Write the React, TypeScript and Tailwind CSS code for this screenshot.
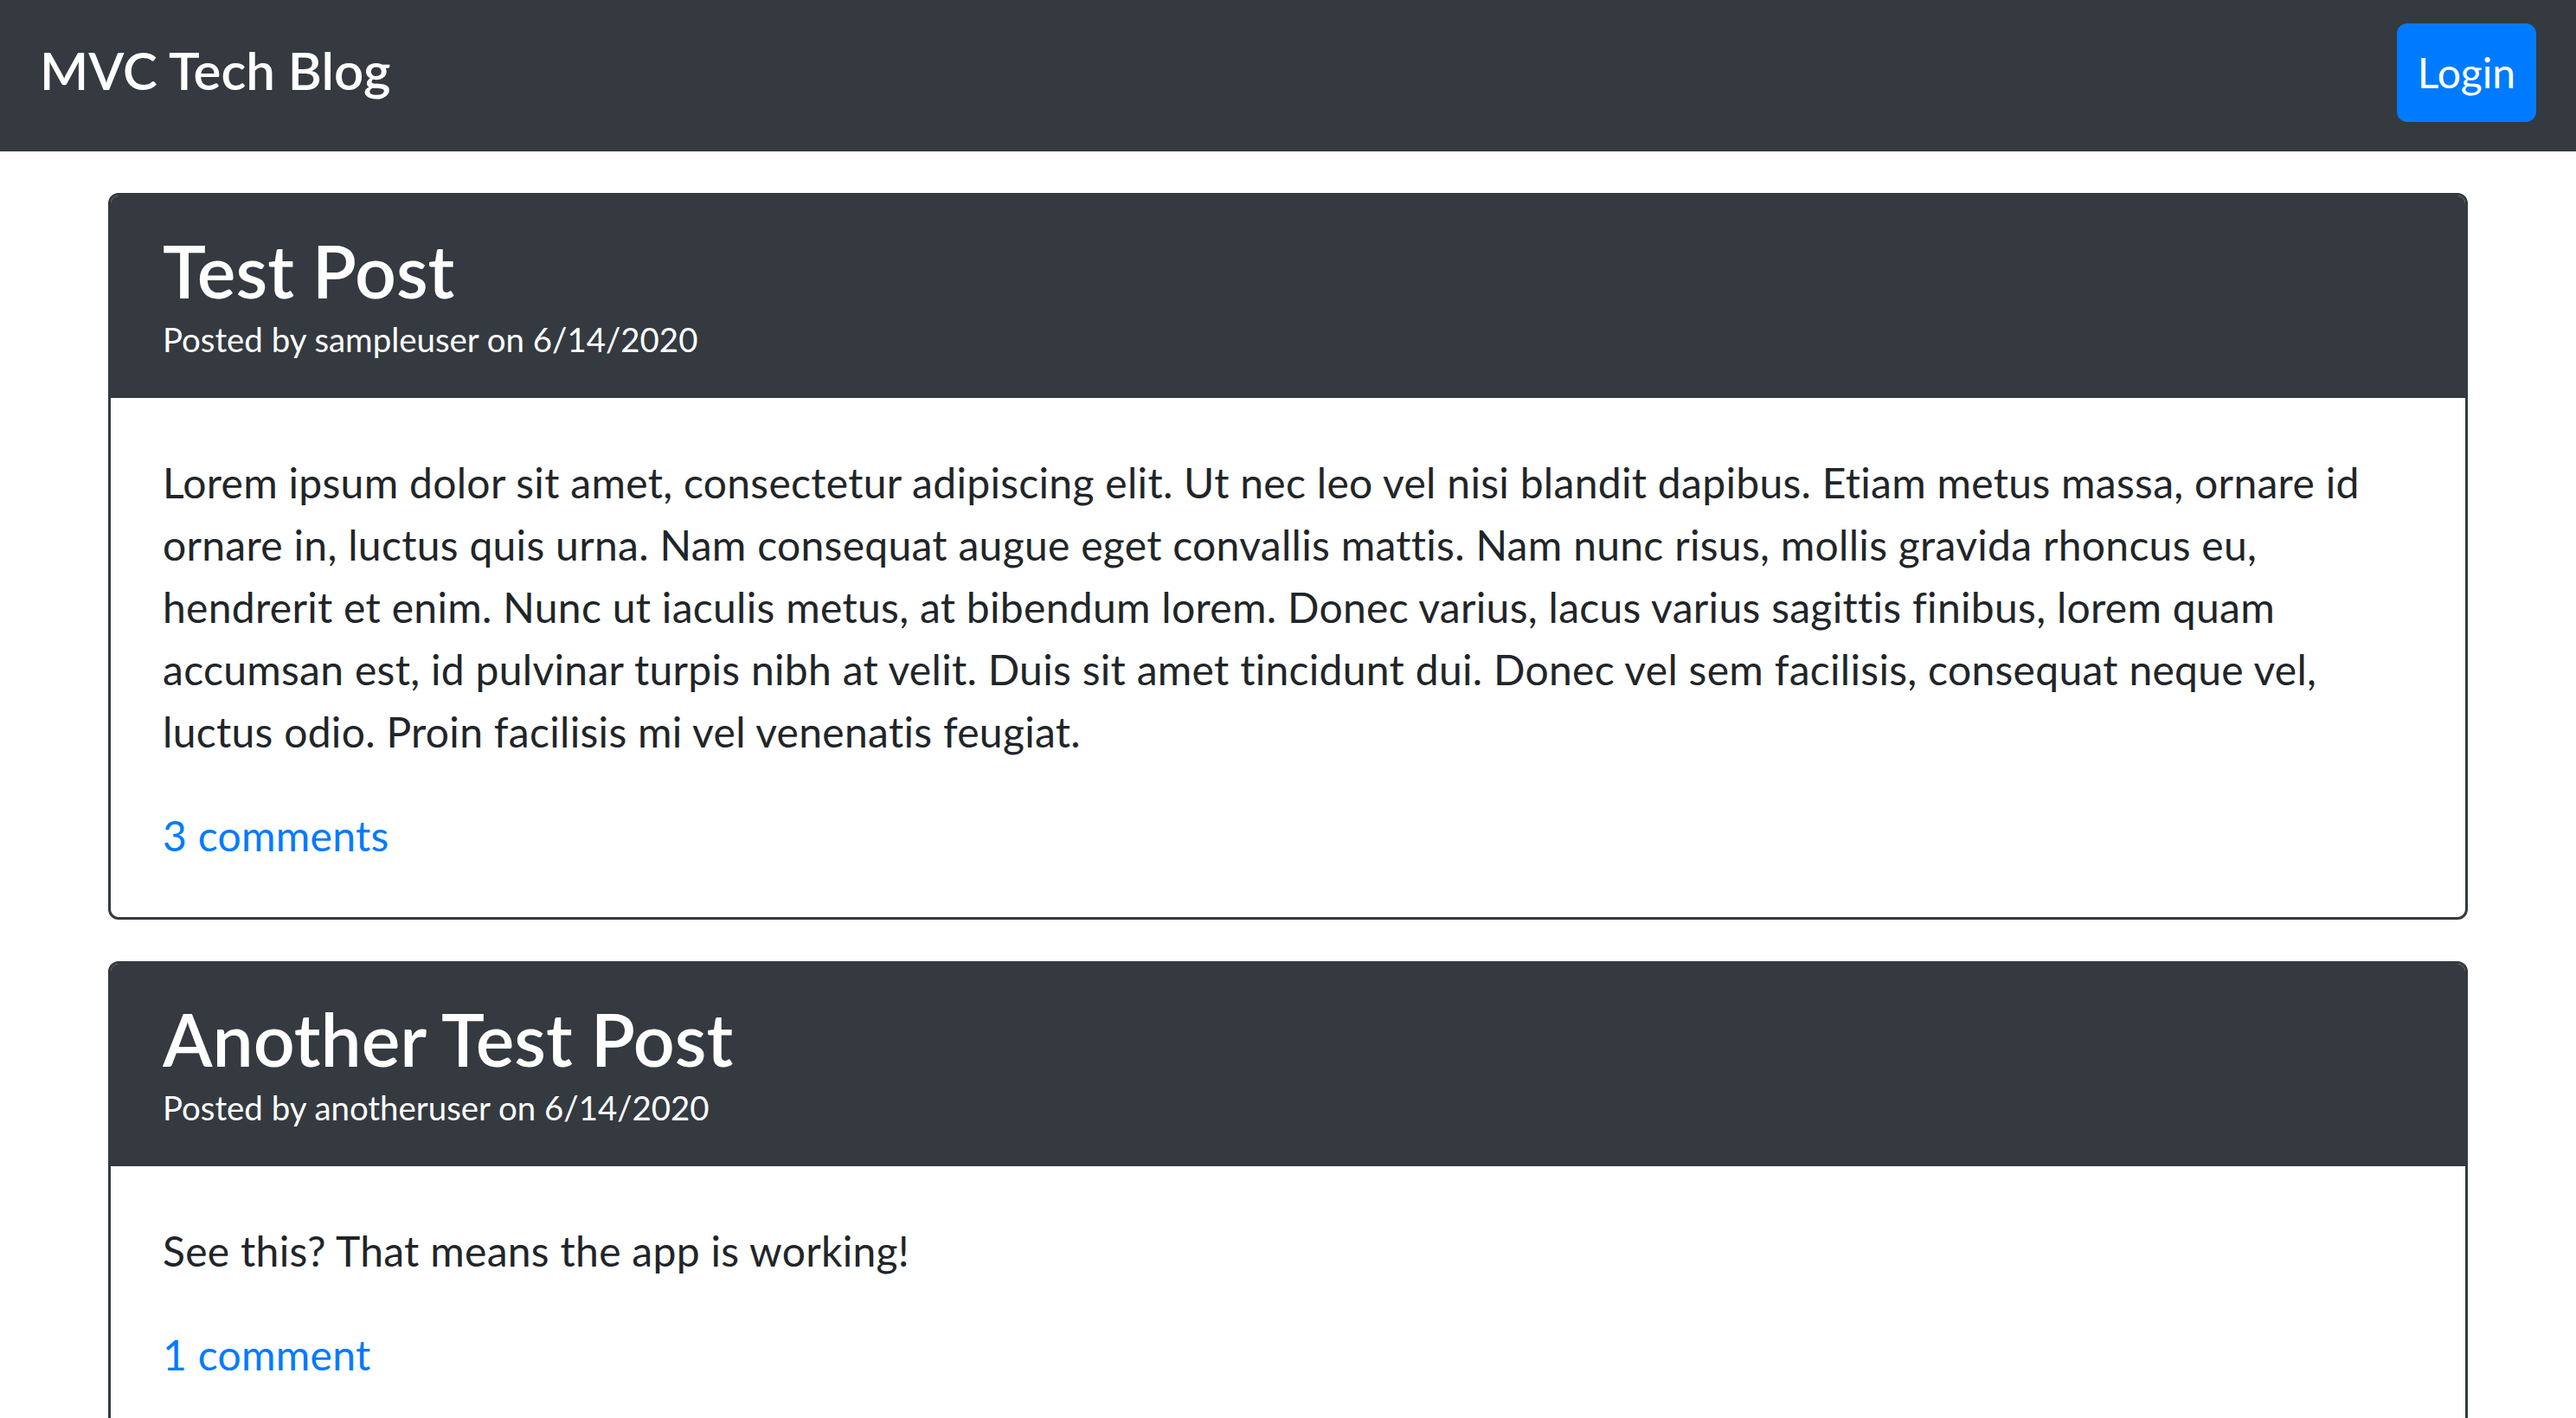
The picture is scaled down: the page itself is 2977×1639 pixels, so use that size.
const posts = [
  {
    title: 'Test Post',
    author: 'sampleuser',
    date: '6/14/2020',
    lines: [
      'Lorem ipsum dolor sit amet, consectetur adipiscing elit. Ut nec leo vel nisi blandit dapibus. Etiam metus massa, ornare id',
      'ornare in, luctus quis urna. Nam consequat augue eget convallis mattis. Nam nunc risus, mollis gravida rhoncus eu,',
      'hendrerit et enim. Nunc ut iaculis metus, at bibendum lorem. Donec varius, lacus varius sagittis finibus, lorem quam',
      'accumsan est, id pulvinar turpis nibh at velit. Duis sit amet tincidunt dui. Donec vel sem facilisis, consequat neque vel,',
      'luctus odio. Proin facilisis mi vel venenatis feugiat.',
    ],
    comments: '3 comments',
  },
  {
    title: 'Another Test Post',
    author: 'anotheruser',
    date: '6/14/2020',
    lines: ['See this? That means the app is working!'],
    comments: '1 comment',
  },
];

const App = () => {
  return (
    <div className="min-h-screen bg-white font-['Lato',sans-serif] text-[48px] leading-[72px] text-[#212529]">
      {/* Navbar */}
      <nav className="flex h-[175px] items-center justify-between bg-[#343a40] px-[46px] pb-[7px]">
        <a href="#" className="mb-[6px] text-[60px] leading-[90px] font-semibold text-white">
          MVC Tech Blog
        </a>
        <button className="h-[114px] rounded-[12px] bg-[#007bff] px-[24px] text-[48px] leading-[72px] text-white">
          Login
        </button>
      </nav>

      {/* Posts */}
      <main className="flex flex-col gap-[48px] px-[125px] pt-[48px]">
        {posts.map((post) => (
          <div key={post.title} className="overflow-hidden rounded-[12px] border-[3px] border-[#343a40]">
            <div className="bg-[#343a40] px-[60px] pt-[36px] pb-[39px] text-white">
              <h3 className="text-[84px] leading-[101px] font-semibold">{post.title}</h3>
              <p className="text-[38.4px] leading-[58px]">
                Posted by {post.author} on {post.date}
              </p>
            </div>
            <div className="px-[60px] pt-[62px] pb-[58px]">
              <p className="mb-[48px] whitespace-nowrap tracking-[0.3px]">
                {post.lines.map((line, i) => (
                  <span key={i} className="block">
                    {line}
                  </span>
                ))}
              </p>
              <a href="#" className="tracking-[0.3px] text-[#007bff]">
                {post.comments}
              </a>
            </div>
          </div>
        ))}
      </main>
    </div>
  );
};

export default App;
